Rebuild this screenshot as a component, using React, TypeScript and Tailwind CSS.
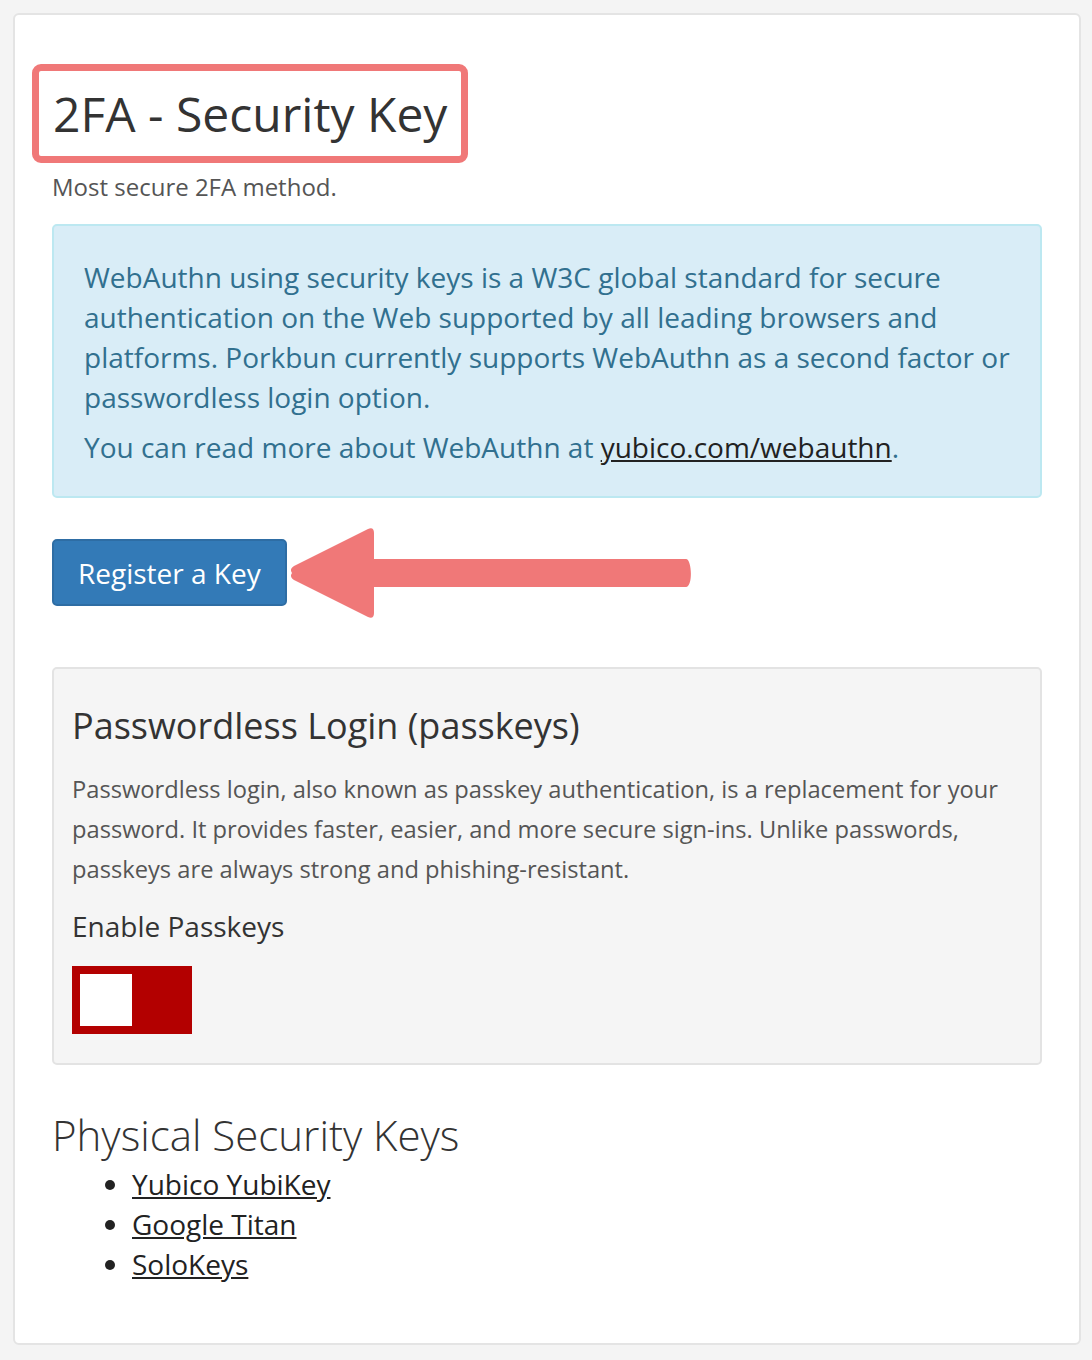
import React from 'react';

// Red annotation arrow pointing at the register button
const Arrow = () => (
    <svg width="404" height="92" viewBox="0 0 404 92" className="block">
        <path
            d="M2 46 C0 43 1 41 4 39 L78 2 C82 0 84 2 84 6 L84 32 L396 32 C402 32 403 60 396 60 L84 60 L84 86 C84 90 82 92 78 90 L4 53 C1 51 0 49 2 46 Z"
            fill="#f07878"
        />
    </svg>
);

const App: React.FC = () => {
    const keys = ['Yubico YubiKey', 'Google Titan', 'SoloKeys'];

    return (
        <div className="min-h-[1360px] bg-[#f4f4f4] pl-[13px] pr-[11px] pt-[13px] pb-[19px]" style={{ fontFamily: '"Open Sans", "Noto Sans", sans-serif' }}>
            <div className="bg-white border-2 border-[#e4e4e4] rounded-[6px] pl-[37px] pr-[37px] pt-[49px] pb-[59px] text-[#333]">
                {/* Title with highlight box */}
                <div className="inline-block -ml-[20px] border-[7px] border-[#f07878] rounded-[9px] px-[14px] py-[14px]">
                    <h1 className="text-[48px] leading-[57px] text-[#333]">2FA - Security Key</h1>
                </div>
                <p className="mt-[9px] text-[24px] leading-[30px] text-[#555]">Most secure 2FA method.</p>

                {/* Info alert */}
                <div className="mt-[22px] bg-[#d9edf7] border-2 border-[#bce8f1] rounded-[5px] pl-[30px] pr-[22px] pt-[31px] pb-[29px] text-[#31708f] text-[28px] leading-[40px]">
                    <p>
                        WebAuthn using security keys is a W3C global standard for secure authentication on the Web supported by all leading browsers and platforms. Porkbun currently supports WebAuthn as a second factor or passwordless login option.
                    </p>
                    <p className="mt-[10px]">
                        You can read more about WebAuthn at <a href="#" className="underline text-[#222]">yubico.com/webauthn</a>.
                    </p>
                </div>

                <div className="mt-[41px] flex items-center">
                    <button className="h-[67px] px-[24px] bg-[#337ab7] border-2 border-[#2e6da4] rounded-[5px] text-white text-[28px]">
                        Register a Key
                    </button>
                    <div className="ml-[3px] -my-[13px]">
                        <Arrow />
                    </div>
                </div>

                {/* Passkeys well */}
                <div className="mt-[61px] bg-[#f5f5f5] border-2 border-[#e3e3e3] rounded-[5px] px-[18px] pt-[33px] pb-[29px]">
                    <h3 className="text-[36px] leading-[48px] text-[#333]">Passwordless Login (passkeys)</h3>
                    <p className="mt-[19px] text-[23.7px] leading-[40px] text-[#555]">
                        Passwordless login, also known as passkey authentication, is a replacement for your password. It provides faster, easier, and more secure sign-ins. Unlike passwords, passkeys are always strong and phishing-resistant.
                    </p>
                    <p className="mt-[17px] text-[28px] leading-[40px] text-[#333]">Enable Passkeys</p>
                    <div className="mt-[20px] w-[120px] h-[68px] bg-[#b30000] p-[8px]">
                        <div className="w-[52px] h-[52px] bg-white" />
                    </div>
                </div>

                <h2 className="mt-[42px] text-[42px] leading-[56px] font-light text-[#333]">Physical Security Keys</h2>
                <ul className="mt-[1px] pl-[80px] list-disc text-[28px] leading-[40px] text-[#222]">
                    {keys.map(k => (
                        <li key={k}><a href="#" className="underline">{k}</a></li>
                    ))}
                </ul>
            </div>
        </div>
    );
};

export default App;
